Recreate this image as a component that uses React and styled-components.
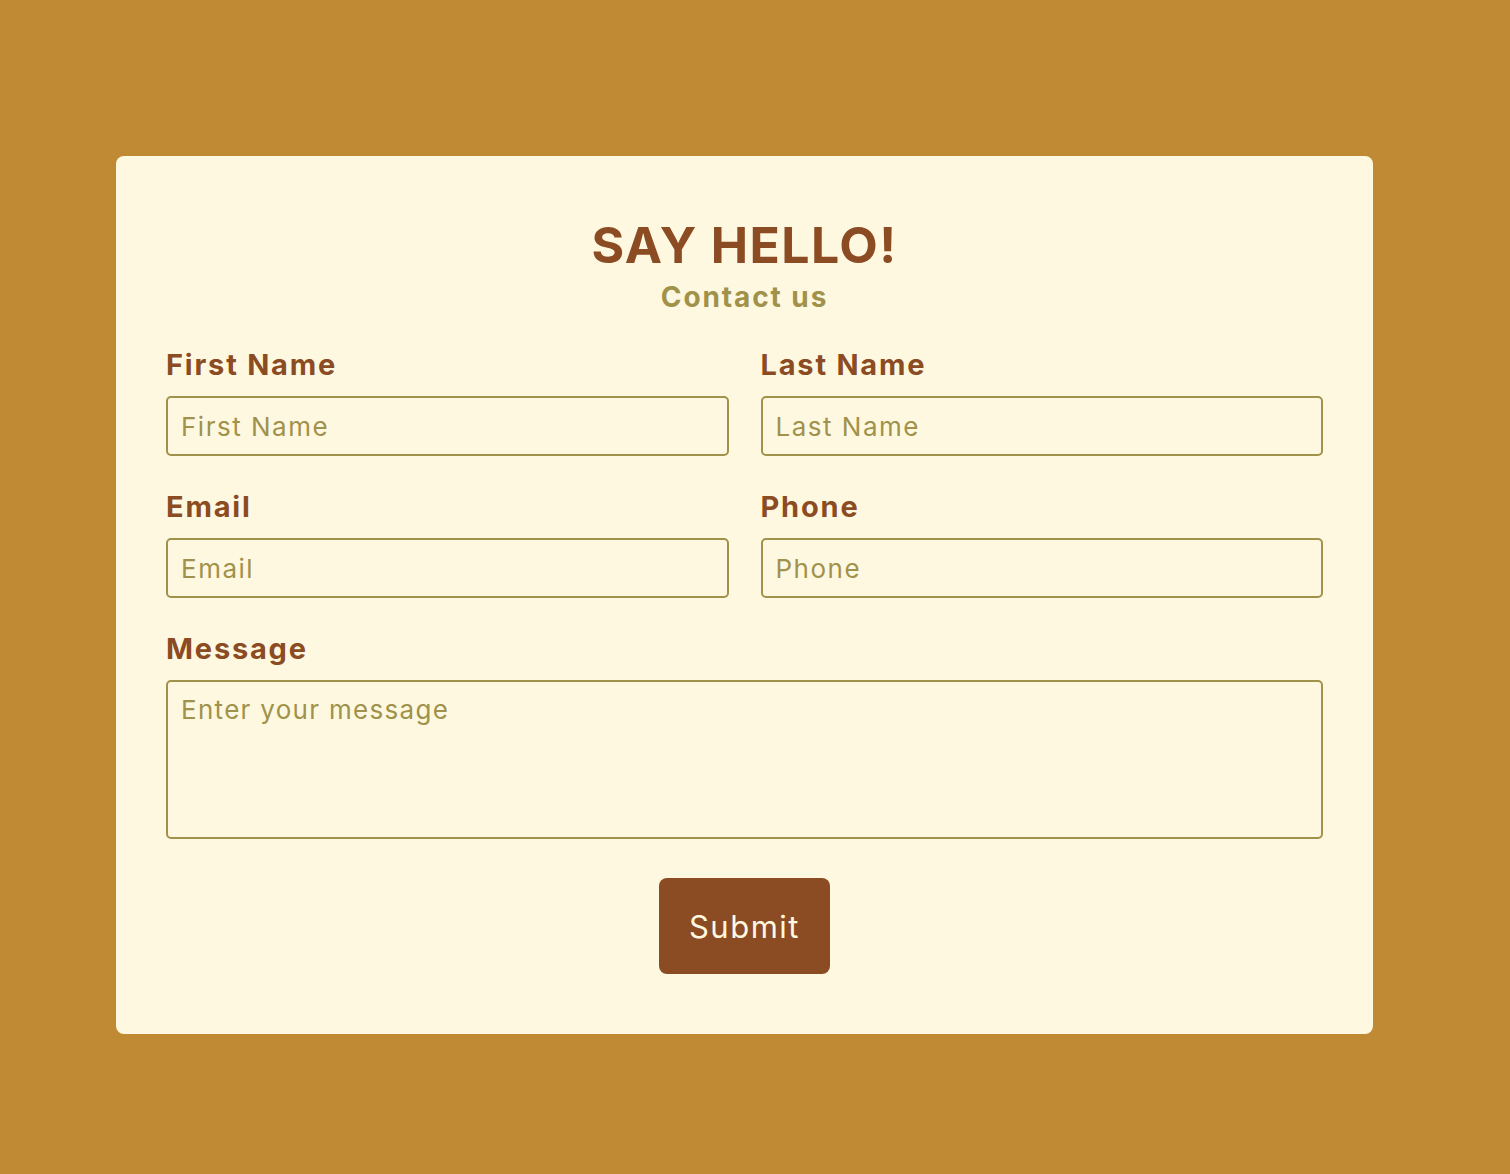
import React from "react";
import styled, { createGlobalStyle } from "styled-components";

const Global = createGlobalStyle`
  html, body { margin: 0; padding: 0; background: #bf8a33; }
  body { font-family: "Inter", "Noto Sans", sans-serif; }
  * { box-sizing: border-box; }
`;

const Page = styled.div`
  min-height: 1174px;
  padding: 156px 137px 141px 116px;
`;

const Card = styled.form`
  background: #fff8e1;
  border-radius: 8px;
  padding: 50px 50px 60px;
  display: flex;
  flex-direction: column;
`;

const Header = styled.header`
  display: flex;
  flex-direction: column;
  align-items: center;
  margin-bottom: 35px;
`;

const Title = styled.h1`
  margin: 0;
  font-size: 50px;
  line-height: 78px;
  font-weight: 700;
  letter-spacing: 1.4px;
  color: #8b4c23;
`;

const Subtitle = styled.h2`
  margin: 0;
  font-size: 28px;
  line-height: 26px;
  font-weight: 700;
  letter-spacing: 1.9px;
  color: #a0924a;
`;

const Grid = styled.div`
  display: grid;
  grid-template-columns: 1fr 1fr;
  column-gap: 32px;
  row-gap: 31px;
`;

const Field = styled.div`
  display: flex;
  flex-direction: column;
  grid-column: ${(p) => (p.$full ? "1 / -1" : "auto")};
`;

const Label = styled.label`
  font-size: 29px;
  line-height: 40px;
  font-weight: 700;
  letter-spacing: 1.8px;
  color: #8b4c23;
  margin-bottom: 11px;
`;

const Input = styled.input`
  height: 60px;
  border: 2px solid #a0924a;
  border-radius: 5px;
  background: transparent;
  padding: 0 13px;
  font-family: inherit;
  font-size: 26px;
  letter-spacing: 1.5px;
  color: #8b4c23;
  &::placeholder { color: #a0924a; }
`;

const TextArea = styled.textarea`
  height: 159px;
  border: 2px solid #a0924a;
  border-radius: 5px;
  background: transparent;
  padding: 12px 13px;
  font-family: inherit;
  font-size: 26px;
  letter-spacing: 1.3px;
  resize: none;
  color: #8b4c23;
  &::placeholder { color: #a0924a; }
`;

const Actions = styled.div`
  display: flex;
  justify-content: center;
  margin-top: 39px;
`;

const Button = styled.button`
  width: 171px;
  height: 96px;
  border: none;
  border-radius: 8px;
  background: #8b4c23;
  color: #fff8e1;
  font-family: inherit;
  font-size: 31px;
  font-weight: 400;
  letter-spacing: 1.5px;
  cursor: pointer;
`;

export default function App() {
  return (
    <>
      <Global />
      <Page>
        <Card onSubmit={(e) => e.preventDefault()}>
          <Header>
            <Title>SAY HELLO!</Title>
            <Subtitle>Contact us</Subtitle>
          </Header>
          <Grid>
            <Field>
              <Label htmlFor="first">First Name</Label>
              <Input id="first" placeholder="First Name" />
            </Field>
            <Field>
              <Label htmlFor="last">Last Name</Label>
              <Input id="last" placeholder="Last Name" />
            </Field>
            <Field>
              <Label htmlFor="email">Email</Label>
              <Input id="email" placeholder="Email" />
            </Field>
            <Field>
              <Label htmlFor="phone">Phone</Label>
              <Input id="phone" placeholder="Phone" />
            </Field>
            <Field $full>
              <Label htmlFor="msg">Message</Label>
              <TextArea id="msg" placeholder="Enter your message" />
            </Field>
          </Grid>
          <Actions>
            <Button type="submit">Submit</Button>
          </Actions>
        </Card>
      </Page>
    </>
  );
}
